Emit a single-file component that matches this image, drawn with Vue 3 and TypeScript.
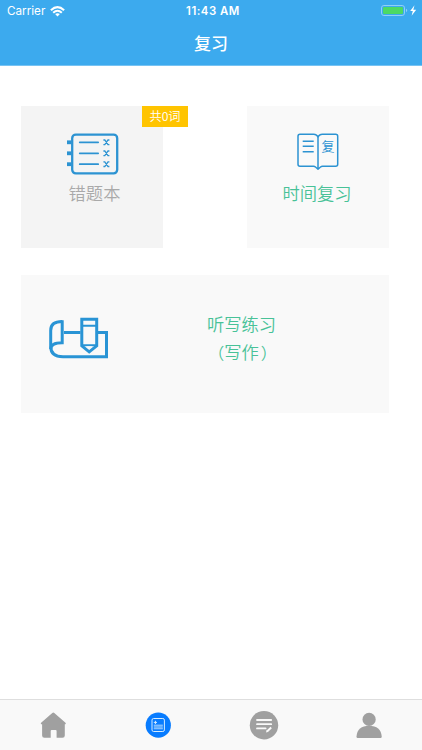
<script setup lang="ts">
interface Tab {
  id: string
  label: string
}

const tabs: Tab[] = [
  { id: 'home', label: 'Home' },
  { id: 'review', label: 'Review' },
  { id: 'notes', label: 'Notes' },
  { id: 'profile', label: 'Profile' },
]
const wordCount = 0
const rowCenters: number[] = [142.3, 153.3, 164.2]
</script>

<template>
  <div class="screen">
    <header class="header">
      <div class="status">
        <div class="carrier">
          <span>Carrier</span>
          <svg class="wifi" width="15" height="11" viewBox="0 0 15 11" fill="none" stroke="#fff" stroke-width="2.1">
            <path d="M.9 4.2Q7.5 -1.8 14.1 4.2" />
            <path d="M3.2 6.7Q7.5 2.8 11.8 6.7" />
            <path d="M5.1 8.1Q7.5 6.2 9.9 8.1L7.5 10.6Z" fill="#fff" stroke="none" />
          </svg>
        </div>
        <div class="clock">11:43 AM</div>
        <div class="power">
          <svg width="36" height="14" viewBox="0 0 36 14">
            <rect x=".5" y="1.5" width="23" height="10" rx="2.4" fill="none" stroke="#90d0f7" />
            <rect x="2" y="3" width="20" height="7" rx="1.2" fill="#4cd964" />
            <path d="M25 4.8Q27.5 6.5 25 8.2Z" fill="#90d0f7" />
            <path d="M33.5 1.3L29.2 7.1H31.8L30.6 11.7L35.2 5.8H32.3Z" fill="#fff" />
          </svg>
        </div>
      </div>
      <h1 class="title">复习</h1>
    </header>

    <main class="content">
      <section class="card mistakes">
        <svg class="icon" width="54" height="42" viewBox="65 133 54 42" fill="none" stroke="#2c93d2">
          <rect x="72.2" y="134.6" width="45" height="38.8" rx="3.6" stroke-width="2.3" />
          <g v-for="y in rowCenters" :key="y">
            <rect x="67" :y="y - 1.9" width="4.2" height="3.8" fill="#2c93d2" stroke="none" />
            <path :d="`M79.7 ${y}H98.2`" stroke-width="1.7" stroke-linecap="round" />
            <path :d="`M103.4 ${y - 2.3}H104.8L108 ${y + 2.3}H109.4M103.4 ${y + 2.3}H104.8L108 ${y - 2.3}H109.4`" stroke-width="1.3" />
          </g>
        </svg>
        <span class="label muted">错题本</span>
        <span class="badge">共{{ wordCount }}词</span>
      </section>

      <section class="card timed">
        <svg class="icon" width="44" height="42" viewBox="296 133 44 42" fill="none" stroke="#2c93d2" stroke-width="1.5" stroke-linejoin="round">
          <path d="M318 169.2L315.5 167Q314.7 166.2 313.5 166.2H300Q298 166.2 298 164.2V136.2Q298 134.3 300 134.3H313.5Q317.1 134.3 318 137.5Q318.9 134.3 322.5 134.3H335.7Q337.7 134.3 337.7 136.2V164.2Q337.7 166.2 335.7 166.2H322.5Q321.3 166.2 320.5 167ZM318 137.5V168.5" />
          <path d="M302.7 141.2H313.7M302.7 146.2H313.7M302.7 151.7H313.7" stroke-width="1.6" />
          <text class="book-text" x="321.4" y="150.7">复</text>
        </svg>
        <span class="label">时间复习</span>
      </section>

      <section class="card dictation">
        <svg width="60" height="42" viewBox="49 317 60 42" fill="none" stroke="#2994d5" stroke-width="3">
          <path d="M62.2 321.6Q50.7 321.6 50.7 330.5V346.5Q50.7 356.7 63 356.7H106.5V332.5H98M80.5 332.5H64" />
          <path d="M62.2 320.2V342.7Q50.7 342.7 50.7 349" />
          <path d="M81.8 319.2H96.7V345.8L89.2 351.8L81.8 345.8Z" />
          <path d="M82 325.7H96.5M82 345.2H96.5" stroke-width="2" />
          <path d="M86 346.3H92.4L89.2 349.2Z" fill="#f9f9f9" stroke="none" />
        </svg>
        <div class="lines">
          <span>听写练习</span>
          <span class="wrapped"><i class="open">（</i>写作<i class="close">）</i></span>
        </div>
      </section>
    </main>

    <nav class="tabs">
      <button v-for="tab in tabs" :key="tab.id" class="tab" type="button" :aria-label="tab.label">
        <svg v-if="tab.id === 'home'" width="30" height="30" viewBox="0 0 30 30" fill="#a0a0a0">
          <path d="M14.3 3Q15.3 2.1 16.3 3L27.5 12.7Q28.5 14.2 27.1 14.2H26.8V25.5Q26.8 27.8 24.5 27.8H18.6V21Q18.6 20 17.6 20H13.7Q12.7 20 12.7 21V27.8H6.4Q4.1 27.8 4.1 25.5V14.2H3.5Q2.1 14.2 3.1 12.7Z" />
        </svg>
        <svg v-else-if="tab.id === 'review'" width="30" height="30" viewBox="0 0 30 30" fill="none" stroke="#d6ecff">
          <circle cx="15.3" cy="15.2" r="12.6" fill="#087cff" stroke="none" />
          <rect x="9" y="8.5" width="12.4" height="13" rx="1.6" stroke-width="1" />
          <path d="M10.8 12.4H14M12.4 10.8V14" stroke-width="1" />
          <rect x="10.8" y="14.8" width="9" height="4.3" fill="#65b0ff" stroke="none" />
          <path d="M10.8 15.1H19.8M10.8 18.8H19.8" stroke="#a4d0ff" stroke-width=".7" />
        </svg>
        <svg v-else-if="tab.id === 'notes'" width="30" height="30" viewBox="0 0 30 30" fill="none" stroke="#f9f9f9">
          <circle cx="15" cy="15.2" r="14.2" fill="#a0a0a0" stroke="none" />
          <path d="M8 10H22.2M8 14.2H22.2M8 18.4H16.6" stroke-width="1.8" stroke-linecap="round" />
          <path d="M18 21.5L22.2 17.6" stroke-width="2" />
          <path d="M17 22.6L17.6 20.2L19.2 21.8Z" fill="#f9f9f9" stroke="none" />
        </svg>
        <svg v-else width="30" height="30" viewBox="0 0 30 30" fill="#a0a0a0">
          <circle cx="15.1" cy="9.4" r="6.6" />
          <path d="M2.5 26.5Q3.3 15.7 15.1 15.7Q26.9 15.7 27.7 26.5Q27.7 28 26.6 28H3.6Q2.5 28 2.5 26.5Z" />
        </svg>
      </button>
    </nav>
  </div>
</template>

<style>
body {
  margin: 0;
}
</style>

<style scoped>
.screen {
  width: 422px;
  height: 750px;
  display: flex;
  flex-direction: column;
  background: #fff;
  font-family: Inter, "Noto Sans CJK SC", sans-serif;
  overflow: hidden;
}
.header {
  height: 66px;
  flex: none;
  box-sizing: border-box;
  border-bottom: 1px solid #77c3f3;
  background: #3caaee;
  color: #fff;
}
.status {
  height: 22px;
  display: grid;
  grid-template-columns: 1fr auto 1fr;
  align-items: center;
  padding: 0 5px 0 7px;
  font-size: 11.7px;
  line-height: 22px;
}
.carrier {
  display: flex;
  align-items: center;
  gap: 5px;
}
.clock {
  padding-left: 2px;
  font-weight: 600;
  font-size: 11.4px;
  letter-spacing: .5px;
}
.power {
  display: flex;
  justify-content: flex-end;
}
.title {
  margin: 0;
  text-align: center;
  font-family: "Noto Sans CJK SC", sans-serif;
  font-size: 17px;
  font-weight: 500;
  line-height: 42px;
}
.content {
  flex: 1;
  display: grid;
  grid-template-columns: 142px 142px;
  grid-template-rows: 142px 138px;
  justify-content: space-between;
  align-content: start;
  row-gap: 27px;
  padding: 40px 33px 0 21px;
  font-family: "Noto Sans CJK SC", sans-serif;
}
.card {
  position: relative;
  background: #f9f9f9;
  color: #48c298;
  font-size: 17.3px;
  font-weight: 350;
}
.mistakes,
.timed {
  display: flex;
  flex-direction: column;
  align-items: center;
  padding-top: 27px;
  box-sizing: border-box;
}
.mistakes {
  background: #f4f4f4;
}
.icon {
  display: block;
}
.label {
  margin-top: 5px;
  line-height: 26px;
}
.timed .label {
  margin-left: -2px;
}
.mistakes .label {
  padding-left: 5px;
}
.label.muted {
  color: #a9a9a9;
}
.book-text {
  font-family: "Noto Sans CJK SC", sans-serif;
  font-size: 13px;
  font-weight: 350;
  fill: #2c93d2;
  stroke: none;
}
.badge {
  position: absolute;
  top: 0;
  right: -25px;
  width: 46px;
  height: 20.5px;
  background: #ffc400;
  color: #fff;
  font-size: 12.2px;
  line-height: 20px;
  text-align: center;
}
.dictation {
  grid-column: 1 / -1;
  display: flex;
  align-items: flex-start;
  gap: 98px;
  padding: 42px 0 0 28px;
  box-sizing: border-box;
}
.lines {
  display: flex;
  flex-direction: column;
  align-items: center;
  margin-top: -7.5px;
  line-height: 28.5px;
}
.wrapped {
  white-space: nowrap;
}
.wrapped i {
  font-style: normal;
  font-size: 16px;
}
.open {
  margin: 0 0 0 1px;
}
.close {
  margin: 0 -1px 0 2px;
}
.tabs {
  height: 51px;
  flex: none;
  box-sizing: border-box;
  border-top: 1px solid #dedede;
  background: #f9f9f9;
  display: grid;
  grid-template-columns: repeat(4, 1fr);
}
.tab {
  display: flex;
  align-items: center;
  justify-content: center;
  border: 0;
  margin: 0;
  padding: 0;
  background: none;
}
</style>
